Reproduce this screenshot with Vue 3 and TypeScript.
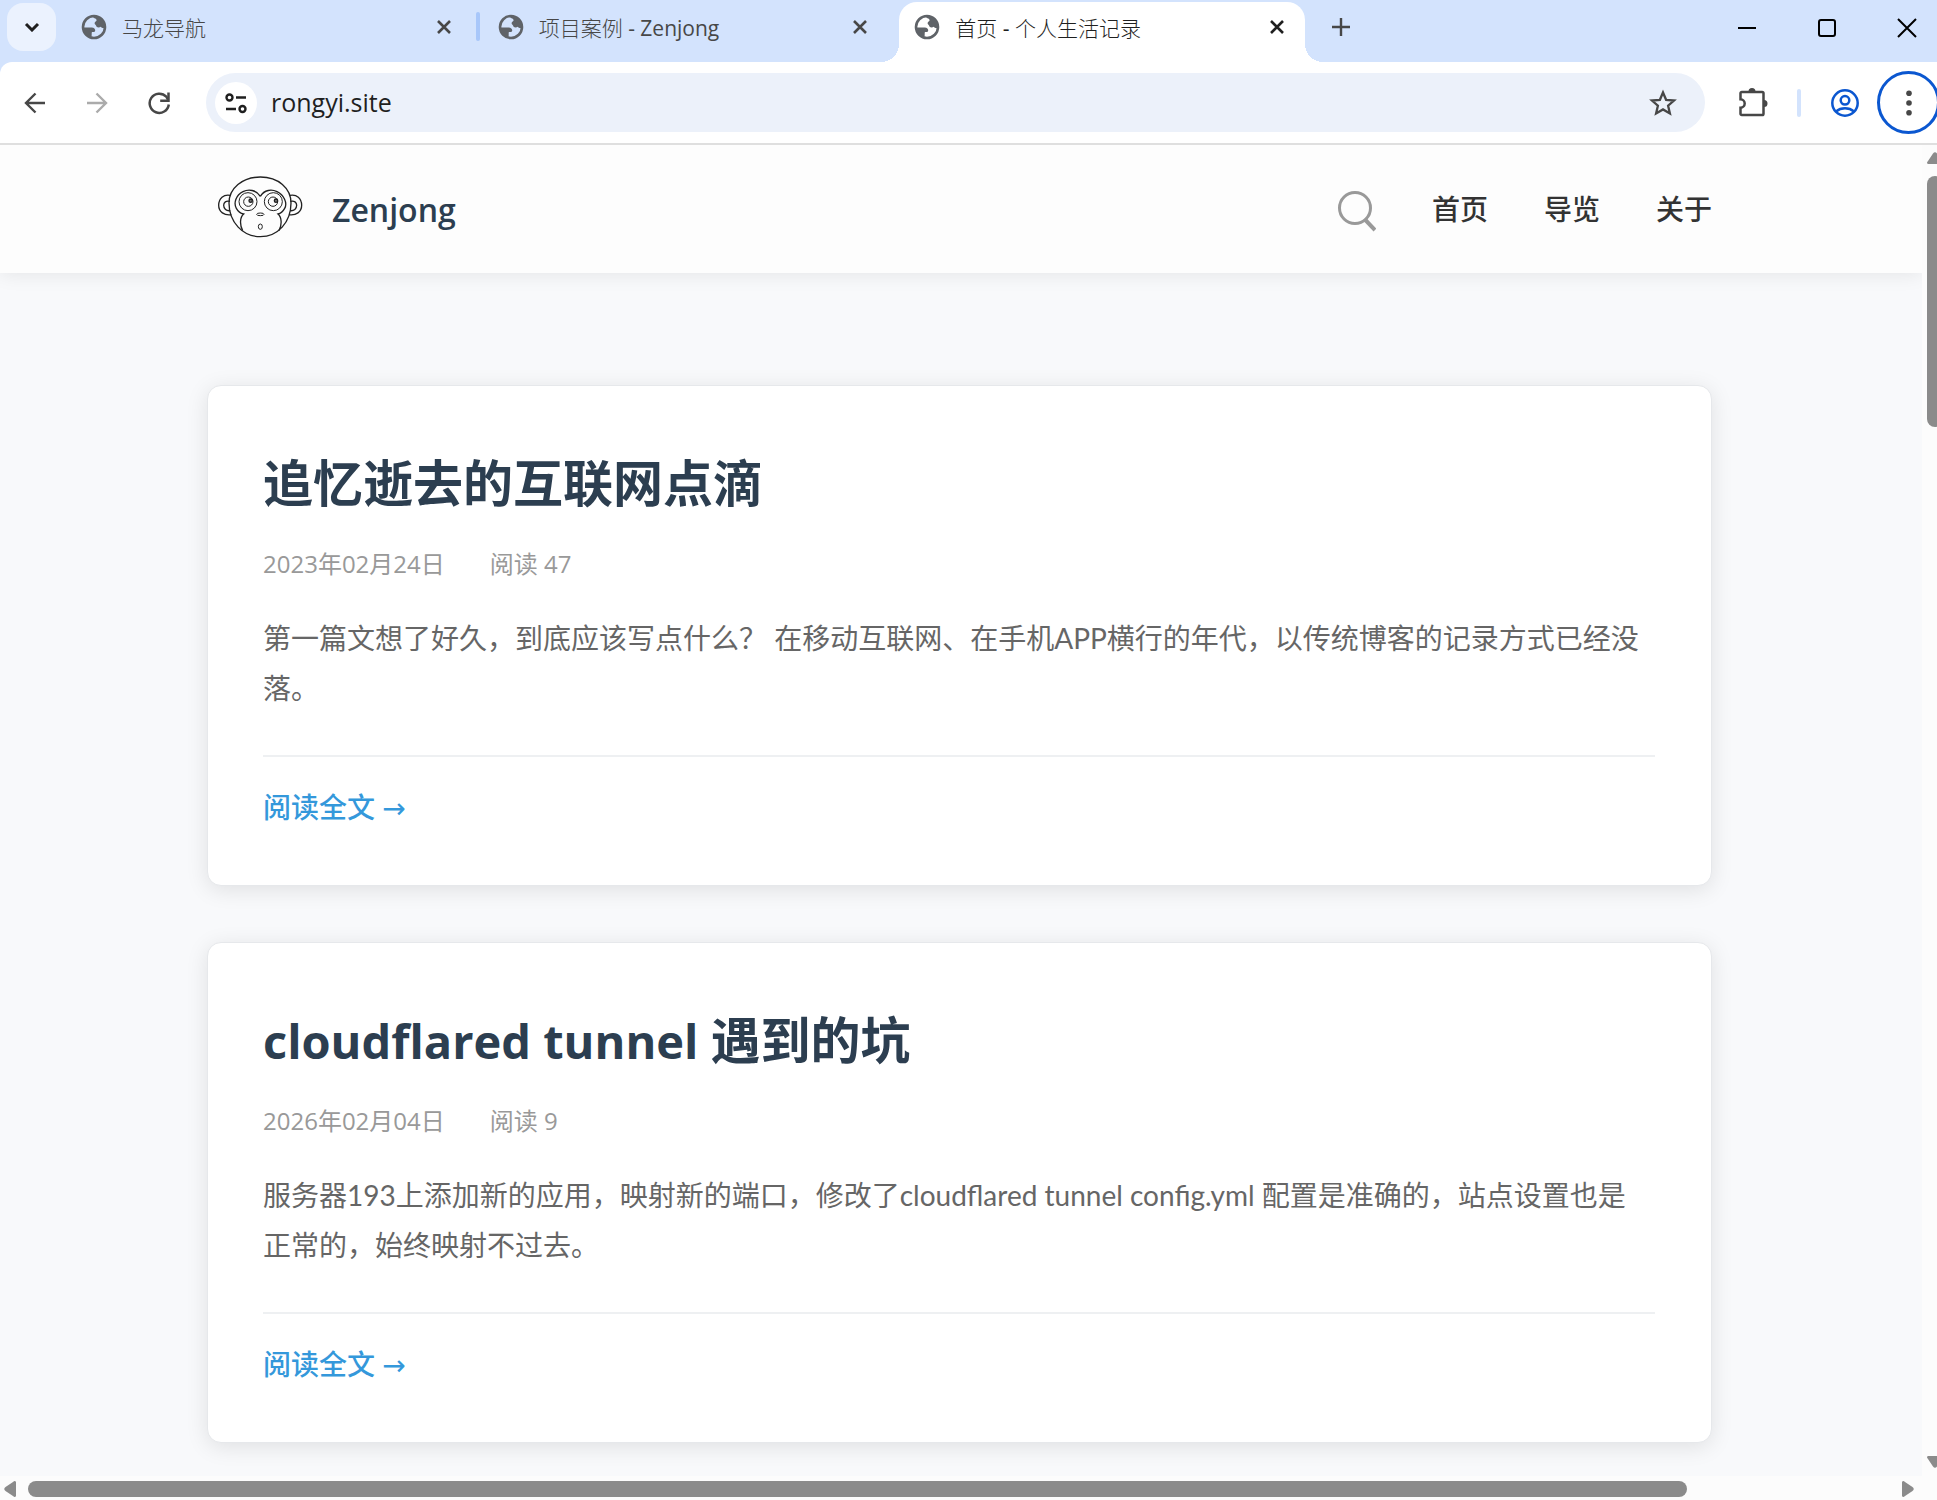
<script setup lang="ts">
interface Tab {
  title: string
  active: boolean
}

interface Post {
  title: string
  date: string
  views: number
  excerpt: string
}

interface Run {
  text: string
  latin: boolean
}

const tabs: Tab[] = [
  { title: '马龙导航', active: false },
  { title: '项目案例 - Zenjong', active: false },
  { title: '首页 - 个人生活记录', active: true },
]

const navItems: string[] = ['首页', '导览', '关于']

const posts: Post[] = [
  {
    title: '追忆逝去的互联网点滴',
    date: '2023年02月24日',
    views: 47,
    excerpt:
      '第一篇文想了好久，到底应该写点什么？ 在移动互联网、在手机APP横行的年代，以传统博客的记录方式已经没落。',
  },
  {
    title: 'cloudflared tunnel 遇到的坑',
    date: '2026年02月04日',
    views: 9,
    excerpt:
      '服务器193上添加新的应用，映射新的端口，修改了cloudflared tunnel config.yml 配置是准确的，站点设置也是正常的，始终映射不过去。',
  },
]

// Splits a heading so that Latin runs can be set a little smaller than the Han characters.
function runs(text: string): Run[] {
  return text
    .split(/([ -~]+)/)
    .filter((part) => part.length > 0)
    .map((part) => ({ text: part, latin: /^[ -~]/.test(part) }))
}
</script>

<template>
  <div class="window">
    <div class="tab-strip">
      <button class="tab-search" aria-label="搜索标签页">
        <svg width="16" height="10" viewBox="0 0 16 10"><path d="M2 2l6 6 6-6" fill="none" stroke="#1f1f1f" stroke-width="3" /></svg>
      </button>
      <div class="tabs">
        <div v-for="(tab, i) in tabs" :key="tab.title" class="tab" :class="{ active: tab.active, divided: i === 0 }">
          <svg class="favicon" width="26" height="26" viewBox="0 0 26 26">
            <circle cx="13" cy="13" r="11" fill="none" stroke="#5f6368" stroke-width="2.6" />
            <path d="M14 2C20 2 24.500 7 24 13.500c-1.500 1.200-3.200.4-4.400-.8-1.300 1.300-4.300.9-4.600-1.200-.2-1.200-1.400-1-1.400-2.600 0-1.400 2-1.300 2-2.700 0-1.700-2.600-1.700-3.600-3.200z" fill="#5f6368" />
            <path d="M1.500 13.500h9.300c2.200 0 3.600 1.600 3.400 3.200-.2 1.400-1.700 1.300-3.300 1.400-.6 2 .4 3.300-.9 5.400C5 22 1.500 18 1.500 13.500z" fill="#5f6368" />
          </svg>
          <span class="tab-title">{{ tab.title }}</span>
          <button class="tab-close" :aria-label="'关闭 ' + tab.title">
            <svg width="16" height="16" viewBox="0 0 16 16"><path d="M2 2l12 12M14 2L2 14" stroke="currentColor" stroke-width="2.600" /></svg>
          </button>
        </div>
      </div>
      <button class="new-tab" aria-label="新标签页">
        <svg width="20" height="20" viewBox="0 0 20 20"><path d="M10 1v18M1 10h18" stroke="#474747" stroke-width="2.400" /></svg>
      </button>
      <div class="window-controls">
        <button aria-label="最小化"><svg width="20" height="20" viewBox="0 0 20 20"><path d="M1 10h18" stroke="#000" stroke-width="2" /></svg></button>
        <button aria-label="最大化"><svg width="20" height="20" viewBox="0 0 20 20"><rect x="2" y="2" width="16" height="16" rx="2" fill="none" stroke="#000" stroke-width="2" /></svg></button>
        <button aria-label="关闭"><svg width="20" height="20" viewBox="0 0 20 20"><path d="M1 1l18 18M19 1L1 19" stroke="#000" stroke-width="2" /></svg></button>
      </div>
    </div>

    <div class="toolbar">
      <div class="history">
        <button aria-label="后退"><svg width="24" height="24" viewBox="0 0 24 24"><path d="M22 12H3M12.500 2.500L3 12l9.500 9.500" fill="none" stroke="#474747" stroke-width="2.400" /></svg></button>
        <button aria-label="前进" disabled><svg width="24" height="24" viewBox="0 0 24 24"><path d="M2 12h19M11.500 2.500L21 12l-9.500 9.500" fill="none" stroke="#ababab" stroke-width="2.400" /></svg></button>
        <button aria-label="重新加载">
          <svg width="24" height="24" viewBox="0 0 24 24"><path d="M21.800 13.500A9.600 9.600 0 1 1 19.300 5.700L21 8.500" fill="none" stroke="#474747" stroke-width="2.500" /><path d="M21.500 1.500v8.300h-8.300" fill="none" stroke="#474747" stroke-width="2.500" /></svg>
        </button>
      </div>
      <div class="omnibox">
        <button class="site-info" aria-label="查看网站信息">
          <svg width="24" height="24" viewBox="0 0 24 24" fill="none" stroke="#1f1f1f" stroke-width="2.400"><circle cx="5.500" cy="6.500" r="3" /><path d="M12 6.500h10M2 18h10" /><circle cx="18.500" cy="18" r="3" /></svg>
        </button>
        <input class="url" type="text" value="rongyi.site" aria-label="地址栏" />
        <button class="star" aria-label="收藏">
          <svg width="28" height="28" viewBox="0 0 28 28"><path d="M14 3.500l3.100 7.300 8 .7-6 5.200 1.800 7.800L14 20.400l-6.900 4.100 1.800-7.800-6-5.200 8-.7z" fill="none" stroke="#474747" stroke-width="2.300" /></svg>
        </button>
      </div>
      <div class="actions">
        <button class="extensions" aria-label="扩展程序">
          <svg width="30" height="30" viewBox="0 0 30 30"><path d="M3.800 5h20.400a1.300 1.300 0 0 1 1.300 1.300v20.400a1.300 1.300 0 0 1-1.300 1.300H3.800a1.300 1.300 0 0 1-1.300-1.300v-6a4 4 0 0 0 0-8.400v-6A1.300 1.300 0 0 1 3.800 5z" fill="none" stroke="#474747" stroke-width="2.500" /><path d="M10.500 4.500a3.500 3.500 0 0 1 7 0zM26 13a3.500 3.500 0 0 1 0 7z" fill="#474747" /></svg>
        </button>
        <span class="divider"></span>
        <button class="profile" aria-label="个人资料">
          <svg width="30" height="30" viewBox="0 0 30 30" fill="none" stroke="#0b57d0" stroke-width="2.500"><circle cx="15" cy="15" r="12.700" /><circle cx="15" cy="12.300" r="4.300" /><path d="M6 23.500c5-4.200 13-4.200 18 0" /></svg>
        </button>
        <button class="menu" aria-label="菜单">
          <svg width="6" height="26" viewBox="0 0 6 26" fill="#474747"><circle cx="3" cy="3.300" r="2.800" /><circle cx="3" cy="13" r="2.800" /><circle cx="3" cy="22.700" r="2.800" /></svg>
        </button>
      </div>
    </div>

    <div class="viewport">
      <div class="page">
        <header class="site-header">
          <a class="brand" href="#">
            <svg width="86" height="65" viewBox="80 70 258 195" fill="none" stroke="#222" stroke-width="4">
              <path d="M120 134C100 130 85 143 85 164c0 20 17 31 38 28M119 152c-12-3-19 3-19 12 0 10 8 18 20 16" />
              <path d="M299 134c20-4 35 9 35 30 0 20-17 31-38 28M300 152c12-3 19 3 19 12 0 10-8 18-20 16" />
              <path d="M210 79c-54 0-94 34-94 78 0 58 42 101 94 101s92-43 92-101c0-44-38-78-92-78z" />
              <path d="M210 137c-12-20-36-22-52-14-21 10-29 34-20 50 5 9 13 15 22 17-12 10-12 34-3 50M210 137c12-20 34-22 50-14 21 10 32 34 23 50-5 9-12 15-20 17 12 10 12 34 3 50" />
              <g stroke-width="3">
                <circle cx="173" cy="153" r="27" /><circle cx="174" cy="153" r="14" />
                <circle cx="249" cy="153" r="27" /><circle cx="248" cy="153" r="14" />
                <ellipse cx="210" cy="191" rx="11" ry="4" /><ellipse cx="210" cy="228" rx="6" ry="8" />
              </g>
              <circle cx="181" cy="150" r="5" fill="#777" /><circle cx="257" cy="150" r="5" fill="#777" />
            </svg>
            <span class="brand-name">Zenjong</span>
          </a>
          <nav class="site-nav">
            <button class="search" aria-label="搜索">
              <svg width="39" height="42" viewBox="0 0 39 42" fill="none" stroke="#999"><circle cx="18" cy="18" r="15.500" stroke-width="3" /><path d="M27.500 29L38 40" stroke-width="4" /></svg>
            </button>
            <a v-for="item in navItems" :key="item" href="#">{{ item }}</a>
          </nav>
        </header>
        <main class="posts">
          <article v-for="post in posts" :key="post.title" class="card">
            <h2><span v-for="(run, i) in runs(post.title)" :key="i" :class="{ latin: run.latin }">{{ run.text }}</span></h2>
            <div class="meta">
              <time>{{ post.date }}</time>
              <span>阅读 {{ post.views }}</span>
            </div>
            <p>{{ post.excerpt }}</p>
            <footer><a href="#">阅读全文 <span class="arrow">→</span></a></footer>
          </article>
        </main>
      </div>
      <div class="vbar">
        <svg width="16" height="12" viewBox="0 0 16 12"><path d="M1 12h14q2-1 0-3L10 1.500Q8-1 6 1.500L1 9q-2 2 0 3z" fill="#8b8b8b" /></svg>
        <div class="vtrack"><div class="vthumb"></div></div>
        <svg width="16" height="12" viewBox="0 0 16 12"><path d="M1 0h14q2 1 0 3l-5 7.500q-2 2.500-4 0L1 3Q-1 1 1 0z" fill="#8b8b8b" /></svg>
      </div>
    </div>
    <div class="hbar">
      <svg width="12" height="16" viewBox="0 0 12 16"><path d="M12 1v14q-1 2-3 0L1.500 10Q-1 8 1.500 6L9 1q2-2 3 0z" fill="#8b8b8b" /></svg>
      <div class="htrack"><div class="hthumb"></div></div>
      <svg width="12" height="16" viewBox="0 0 12 16"><path d="M0 1v14q1 2 3 0l7.500-5q2.500-2 0-4L3 1Q1-1 0 1z" fill="#8b8b8b" /></svg>
    </div>
  </div>
</template>

<style>
body {
  margin: 0;
  overflow: hidden;
}
</style>

<style scoped>
* {
  box-sizing: border-box;
}

.window {
  display: flex;
  flex-direction: column;
  height: 100vh;
  overflow: hidden;
  background: #d3e3fd;
  font-family: 'Open Sans', 'Noto Sans CJK SC', sans-serif;
}

button {
  display: flex;
  align-items: center;
  justify-content: center;
  flex: none;
  padding: 0;
  border: 0;
  background: none;
  font: inherit;
}

svg {
  display: block;
  flex: none;
}

a {
  color: inherit;
  text-decoration: none;
}

/* Tab strip */
.tab-strip {
  display: flex;
  flex: none;
  height: 62px;
  padding: 2px 0 0 7px;
}

.tab-search {
  width: 49px;
  height: 48px;
  margin-top: 1px;
  border-radius: 16px;
  background: #ebf2fe;
}

.tabs {
  display: flex;
  flex: 0 1 1239px;
  gap: 11px;
  margin-left: 10px;
  min-width: 0;
}

.tab {
  position: relative;
  display: flex;
  align-items: center;
  flex: 1 1 0;
  min-width: 0;
  padding: 0 20px 10px 15px;
  color: #474747;
}

.tab.active {
  border-radius: 18px 18px 0 0;
  background: #fff;
  color: #1f1f1f;
}

/* Flared feet of the selected tab */
.tab.active::before,
.tab.active::after {
  content: '';
  position: absolute;
  bottom: 0;
  width: 18px;
  height: 18px;
}

.tab.active::before {
  right: 100%;
  background: radial-gradient(circle at 0 0, transparent 18px, #fff 18px);
}

.tab.active::after {
  left: 100%;
  background: radial-gradient(circle at 100% 0, transparent 18px, #fff 18px);
}

.tab.divided::after {
  content: '';
  position: absolute;
  top: 10px;
  right: -8px;
  width: 4px;
  height: 29px;
  border-radius: 2px;
  background: #a8c7fa;
}

.tab-title {
  flex: 1;
  min-width: 0;
  margin: 2px 0 0 15px;
  overflow: hidden;
  font-family: 'Open Sans', 'Noto Sans CJK SC Light', 'Noto Sans CJK SC', sans-serif;
  font-size: 21px;
  line-height: 30px;
  white-space: nowrap;
}

.tab-close {
  color: inherit;
}

.new-tab {
  width: 40px;
  height: 50px;
  margin-left: 16px;
}

.window-controls {
  display: flex;
  margin: 0 -10px 0 auto;
}

.window-controls button {
  width: 80px;
  height: 52px;
}

/* Toolbar */
.toolbar {
  display: flex;
  align-items: center;
  flex: none;
  height: 83px;
  border-bottom: 2px solid #dfdfdf;
  border-radius: 12px 0 0 0;
  background: #fff;
}

.history {
  display: flex;
  gap: 38px;
  padding-left: 23px;
}

.omnibox {
  display: flex;
  align-items: center;
  flex: 1;
  min-width: 0;
  height: 59px;
  margin-left: 35px;
  padding: 0 28px 0 9px;
  border-radius: 30px;
  background: #ecf1fa;
}

.site-info {
  width: 42px;
  height: 42px;
  border-radius: 50%;
  background: #fff;
}

.url {
  flex: 1;
  min-width: 0;
  margin: 0 0 2px 14px;
  padding: 0;
  border: 0;
  outline: 0;
  background: none;
  color: #1f1f1f;
  font: inherit;
  font-size: 25px;
  line-height: 36px;
}

.actions {
  display: flex;
  align-items: center;
  margin-right: -3px;
}

.extensions {
  margin: 0 0 2px 33px;
}

.divider {
  width: 4px;
  height: 28px;
  margin: 0 29px;
  border-radius: 2px;
  background: #d3e3fd;
}

.menu {
  width: 63px;
  height: 63px;
  margin-left: 17px;
  border: 3px solid #0b57d0;
  border-radius: 50%;
}

/* Web page */
.viewport {
  display: flex;
  flex: 1;
  min-height: 0;
}

.page {
  flex: 1;
  min-width: 0;
  overflow: hidden;
  background: #f8f9fb;
}

.site-header {
  display: flex;
  align-items: center;
  justify-content: space-between;
  height: 128px;
  padding: 0 210px 0 207px;
  background: #fdfdfd;
  box-shadow: 0 2px 18px rgba(0, 0, 0, 0.08);
}

.brand {
  display: flex;
  align-items: center;
  gap: 29px;
  padding-left: 10px;
}

.brand svg {
  margin-bottom: 6px;
}

.brand-name {
  margin-top: 2px;
  color: #2c3e50;
  font-size: 32px;
  font-weight: 600;
  line-height: 48px;
}

.site-nav {
  display: flex;
  align-items: center;
  gap: 56px;
  color: #333;
  font-size: 28px;
  font-weight: 500;
  line-height: 40px;
}

.search {
  margin-top: 4px;
}

.posts {
  display: flex;
  flex-direction: column;
  gap: 56px;
  padding: 112px 210px 56px 207px;
}

.card {
  padding: 56px 56px 53px 55px;
  border: 1px solid #e6e8eb;
  border-radius: 14px;
  background: #fff;
  box-shadow: 0 4px 22px rgba(0, 0, 0, 0.1);
}

h2 {
  margin: 0;
  color: #2c3e50;
  font-size: 50px;
  font-weight: 700;
  line-height: 82px;
}

h2 .latin {
  font-size: 47px;
  line-height: 1;
}

.meta {
  display: flex;
  gap: 45px;
  margin: 22px 0 31px;
  color: #999;
  font-size: 24px;
  line-height: 36px;
}

p {
  margin: 0;
  padding-right: 8px;
  color: #666;
  font-family: Lato, 'Noto Sans CJK SC', sans-serif;
  font-size: 28px;
  line-height: 50px;
}

.card footer {
  margin-top: 42px;
  padding-top: 25px;
  border-top: 2px solid #eef0f2;
  color: #3498db;
  font-size: 28px;
  font-weight: 500;
  line-height: 50px;
}

.arrow {
  font-family: 'DejaVu Sans', sans-serif;
  font-weight: 400;
  line-height: 1;
}

/* Scroll bars */
.vbar {
  display: flex;
  flex-direction: column;
  align-items: center;
  flex: none;
  width: 26px;
  margin-right: -11px;
  padding: 7px 0 8px;
  background: #fcfcfc;
}

.vtrack {
  flex: 1;
  padding: 12px 0;
}

.vthumb {
  width: 16px;
  height: 19.8%;
  border-radius: 8px;
  background: #8b8b8b;
}

.hbar {
  display: flex;
  align-items: center;
  flex: none;
  height: 24px;
  padding: 2px 23px 0 4px;
  background: #fcfcfc;
}

.htrack {
  flex: 1;
  padding: 0 12px;
}

.hthumb {
  width: 89.1%;
  height: 16px;
  border-radius: 8px;
  background: #8b8b8b;
}
</style>
